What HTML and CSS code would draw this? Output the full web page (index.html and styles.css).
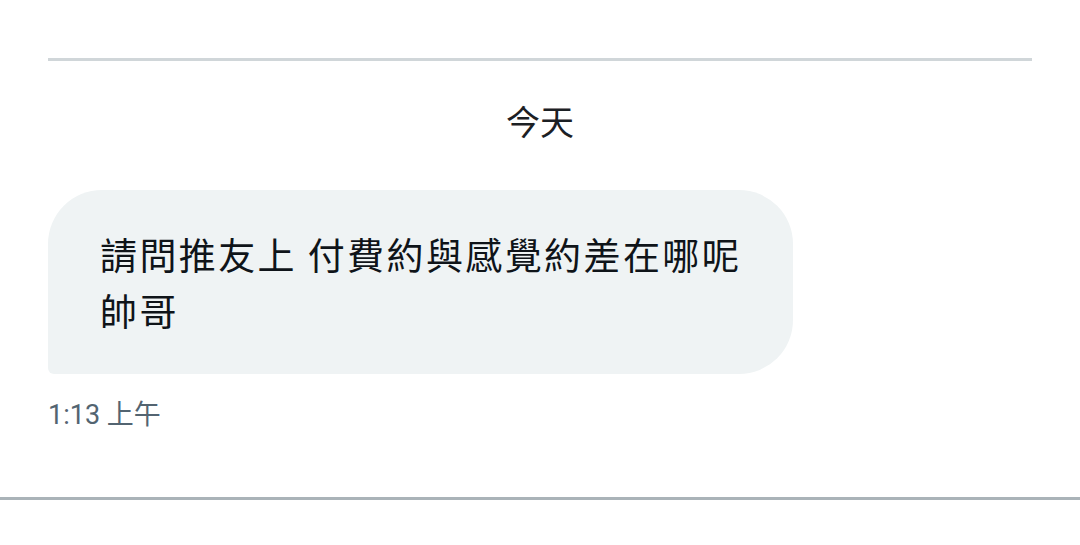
FILE: index.html
```html
<!DOCTYPE html>
<html lang="zh-Hant">
<head>
    <meta charset="UTF-8">
    <meta name="viewport" content="width=device-width, initial-scale=1.0">
    <title>訊息</title>
    <link rel="stylesheet" href="styles.css">
</head>
<body>

    <div class="conversation">
        <div class="thread">
            <!-- 分隔線 -->
            <div class="rule"></div>

            <!-- 日期 -->
            <div class="day">今天</div>

            <!-- 收到的訊息 -->
            <div class="message">
                <div class="bubble">請問推友上 付費約與感覺約差在哪呢帥哥</div>
                <div class="time">1:13 上午</div>
            </div>
        </div>

        <div class="composer-rule"></div>
    </div>

</body>
</html>
```

FILE: styles.css
```css
body {
    margin: 0;
    background: #ffffff;
    font-family: Roboto, "Noto Sans CJK TC", sans-serif;
    color: #0f1419;
}
.conversation {
    display: flex;
    flex-direction: column;
    height: 545px;
}
.thread {
    padding: 0 48px;
}
.rule {
    margin-top: 58px;
    height: 3px;
    background-color: #d0d6d9;
}
.day {
    margin-top: 40px;
    text-align: center;
    font-family: "Noto Sans CJK TC", sans-serif;
    font-size: 34px;
    line-height: 40px;
    color: #1c2024;
}
.message {
    display: flex;
    flex-direction: column;
    align-items: flex-start;
    margin-top: 49px;
}
.bubble {
    box-sizing: border-box;
    width: 745px;
    padding: 36px 26px 36px 52px;
    background-color: #eff3f4;
    border-radius: 54px 54px 54px 6px;
    font-family: "Noto Sans CJK TC", sans-serif;
    font-size: 37px;
    line-height: 56px;
    letter-spacing: 2.4px;
    color: #0f1419;
}
.time {
    margin-top: 25px;
    font-size: 27px;
    line-height: 32px;
    color: #536471;
}
.composer-rule {
    margin-top: 66px;
    height: 3px;
    background-color: #aab3b8;
}
```
